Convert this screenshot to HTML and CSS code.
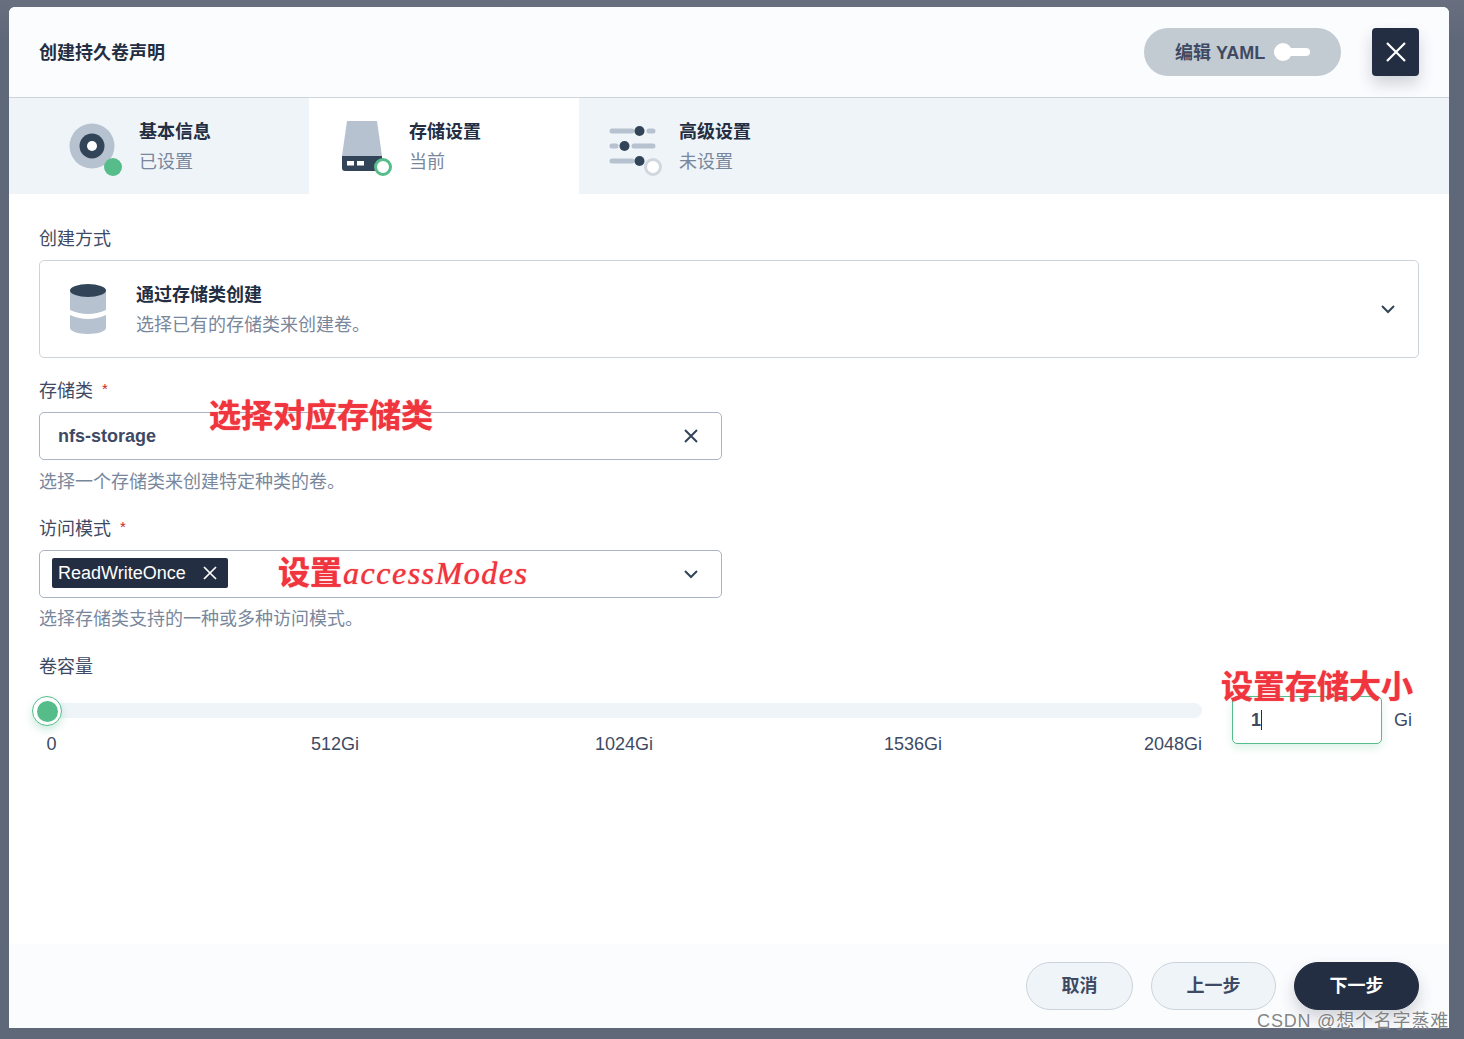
FILE: index.html
```html
<!DOCTYPE html>
<html>
<head>
<meta charset="utf-8"/>
<title>创建持久卷声明</title>
<link rel="stylesheet" href="styles.css">
</head>
<body>
<div class="modal">
  <div class="modal-head">
    <h1 class="modal-title">创建持久卷声明</h1>
    <div class="yaml-btn"><span class="yaml-text">编辑 YAML</span><span class="toggle"><i></i></span></div>
    <div class="close-btn">
      <svg width="20" height="20" viewBox="0 0 20 20"><path d="M1 1L19 19M19 1L1 19" stroke="#fff" stroke-width="2.2" fill="none"/></svg>
    </div>
  </div>

  <div class="tabs">
    <div class="tab tab-first">
      <svg class="tab-icon" width="60" height="60" viewBox="0 0 60 60">
        <circle cx="27" cy="30" r="22.5" fill="#b6c2cf"/>
        <circle cx="27" cy="30" r="12.5" fill="#324558"/>
        <circle cx="27" cy="30" r="5" fill="#fff"/>
        <circle cx="48" cy="51" r="9" fill="#55bc8a"/>
      </svg>
      <div class="tab-text"><b>基本信息</b><span>已设置</span></div>
    </div>
    <div class="tab tab-active">
      <svg class="tab-icon" width="60" height="60" viewBox="0 0 60 60">
        <path d="M12 5H42L47 40H7Z" fill="#b6c2cf"/>
        <path d="M7 40H47V52Q47 55 44 55H10Q7 55 7 52Z" fill="#324558"/>
        <rect x="12" y="45" width="7" height="4.5" fill="#fff"/>
        <rect x="22" y="45" width="7" height="4.5" fill="#fff"/>
        <circle cx="48" cy="51" r="7.5" fill="#fff" stroke="#55bc8a" stroke-width="3"/>
      </svg>
      <div class="tab-text"><b>存储设置</b><span>当前</span></div>
    </div>
    <div class="tab">
      <svg class="tab-icon" width="60" height="60" viewBox="0 0 60 60">
        <g stroke="#b6c2cf" stroke-width="5" stroke-linecap="round" fill="none">
          <path d="M7 15H27M44 15H48M7 30H11M29 30H48M7 45H27"/>
        </g>
        <circle cx="34.500" cy="15" r="5" fill="#324558"/>
        <circle cx="19.500" cy="30" r="5" fill="#324558"/>
        <circle cx="34.500" cy="45" r="5" fill="#324558"/>
        <circle cx="48" cy="51" r="7.500" fill="#fff" stroke="#d0d7df" stroke-width="3"/>
      </svg>
      <div class="tab-text"><b>高级设置</b><span>未设置</span></div>
    </div>
  </div>

  <div class="modal-body">
    <div class="label first">创建方式</div>
    <div class="select select-big">
      <svg width="36" height="50" viewBox="0 0 36 50">
        <path d="M0 6V26Q18 34 36 26V6Z" fill="#b6c2cf"/>
        <path d="M0 31Q18 39 36 31V44C36 47 28 50 18 50C8 50 0 47 0 44Z" fill="#b6c2cf"/>
        <ellipse cx="18" cy="6.500" rx="18" ry="6.500" fill="#324558"/>
      </svg>
      <div class="select-text"><b>通过存储类创建</b><span>选择已有的存储类来创建卷。</span></div>
      <svg class="chev" width="14" height="9" viewBox="0 0 14 9"><path d="M1 1L7 7L13 1" stroke="#324558" stroke-width="2" fill="none"/></svg>
    </div>

    <div class="label">存储类<em>*</em></div>
    <div class="select select-half">
      <span class="value">nfs-storage</span>
      <svg class="chev" width="14" height="14" viewBox="0 0 14 14"><path d="M1 1L13 13M13 1L1 13" stroke="#324558" stroke-width="2" fill="none"/></svg>
    </div>
    <div class="desc">选择一个存储类来创建特定种类的卷。</div>

    <div class="label lower">访问模式<em>*</em></div>
    <div class="select select-half select-tags">
      <span class="tag">ReadWriteOnce
        <svg width="14" height="14" viewBox="0 0 14 14"><path d="M1 1L13 13M13 1L1 13" stroke="#fff" stroke-width="1.700" fill="none"/></svg>
      </span>
      <svg class="chev" width="14" height="9" viewBox="0 0 14 9"><path d="M1 1L7 7L13 1" stroke="#324558" stroke-width="2" fill="none"/></svg>
    </div>
    <div class="desc desc-last">选择存储类支持的一种或多种访问模式。</div>

    <div class="label lower">卷容量</div>
    <div class="size-row">
      <div class="slider">
        <div class="track"><span class="handle"><i></i></span></div>
        <div class="ticks">
          <span>0</span><span>512Gi</span><span>1024Gi</span><span>1536Gi</span><span>2048Gi</span>
        </div>
      </div>
      <div class="size-input">1<span class="caret"></span></div>
      <span class="unit">Gi</span>
    </div>
  </div>

  <div class="modal-foot">
    <div class="btn">取消</div>
    <div class="btn">上一步</div>
    <div class="btn btn-primary">下一步</div>
  </div>

  <!-- red notes drawn on top of the form -->
  <div class="note note-class">选择对应存储类</div>
  <div class="note note-mode">设置<i>accessModes</i></div>
  <div class="note note-size">设置存储大小</div>
  <div class="watermark">CSDN @想个名字蒸难</div>
</div>
</body>
</html>
```

FILE: styles.css
```css
* {
  box-sizing: border-box;
}

body {
  margin: 0;
  height: 1039px;
  padding: 7px 15px 11px 9px;
  background: linear-gradient(#686f7f, #5f6879 40px);
  font-family: "Liberation Sans", "Noto Sans CJK SC", sans-serif;
  font-size: 18px;
  color: #3e4a63;
  overflow: hidden;
}

.modal {
  position: relative;
  display: flex;
  flex-direction: column;
  height: 1021px;
  background: #fff;
  border-radius: 6px 6px 0 0;
}

.modal-head {
  display: flex;
  align-items: center;
  height: 91px;
  padding: 0 30px;
  background: #fbfcfe;
  border-bottom: 1px solid #ccd3db;
  border-radius: 6px 6px 0 0;
}

.modal-title {
  margin: 2px auto 0 0;
  font-size: 18px;
  line-height: 24px;
  color: #242e42;
}

.yaml-btn {
  display: flex;
  align-items: center;
  width: 197px;
  height: 48px;
  padding-left: 31px;
  border-radius: 24px;
  background: #c2cad2;
  font-weight: bold;
}

.yaml-text {
  margin-top: -2px;
}

.toggle {
  position: relative;
  width: 36px;
  height: 8px;
  margin-left: 9px;
  border-radius: 4px;
  background: #fff;
}

.toggle i {
  position: absolute;
  left: 0;
  top: -5px;
  width: 18px;
  height: 18px;
  border-radius: 50%;
  background: #fff;
}

.close-btn {
  display: flex;
  align-items: center;
  justify-content: center;
  width: 47px;
  height: 48px;
  margin-left: 31px;
  border-radius: 4px;
  background: #242e42;
  box-shadow: 0 8px 16px rgba(36, 46, 66, 0.2);
}

.tabs {
  display: flex;
  height: 96px;
  background: #eff4f8;
}

.tab {
  display: flex;
  align-items: flex-start;
  width: 270px;
  padding: 18px 0 0 26px;
}

.tab-first {
  width: 300px;
  padding-left: 56px;
}

.tab-active {
  background: #fff;
}

.tab-icon {
  flex: none;
  margin-right: 14px;
}

.tab-text b,
.tab-text span,
.select-text b,
.select-text span {
  display: block;
  line-height: 30px;
}

.tab-text b,
.select-text b {
  color: #242e42;
}

.tab-text span,
.select-text span {
  color: #79879c;
}

.tab-text {
  margin-top: 1px;
}

.modal-body {
  flex: 1;
  padding: 0 30px;
}

.label {
  height: 24px;
  margin-top: 19px;
  line-height: 24px;
}

.label.first {
  margin-top: 33px;
}

.label.lower {
  margin-top: 21px;
}

.label em {
  margin-left: 9px;
  font-style: normal;
  font-size: 15px;
  color: #ca2621;
  vertical-align: 3px;
}

.select {
  display: flex;
  align-items: center;
  justify-content: space-between;
  height: 48px;
  margin-top: 11px;
  padding: 0 23px 0 18px;
  border: 1px solid #abb4c4;
  border-radius: 5px;
}

.select-big {
  justify-content: flex-start;
  height: 98px;
  margin-top: 9px;
  padding-left: 30px;
  border-color: #ccd3db;
}

.select-big .chev {
  margin-left: auto;
}

.select-text {
  margin: 2px 0 0 30px;
}

.select-half {
  width: 683px;
}

.select-tags {
  padding-left: 12px;
}

.value {
  font-weight: bold;
}

.tag {
  display: flex;
  align-items: center;
  justify-content: space-between;
  width: 176px;
  height: 30px;
  margin-top: -2px;
  padding: 0 11px 0 6px;
  border-radius: 2px;
  background: #242e42;
  color: #fff;
}

.desc {
  height: 24px;
  margin-top: 10px;
  line-height: 24px;
  color: #79879c;
}

.desc-last {
  margin-top: 9px;
}

.desc-last + .label.lower {
  margin-top: 24px;
}

.size-row {
  display: flex;
  align-items: flex-start;
  margin-top: 17px;
}

.slider {
  width: 1155px;
  margin-left: 8px;
  padding-top: 7px;
}

.track {
  position: relative;
  height: 15px;
  border-radius: 8px;
  background: #eff4f8;
}

.handle {
  position: absolute;
  left: -15px;
  top: -7px;
  display: flex;
  align-items: center;
  justify-content: center;
  width: 30px;
  height: 30px;
  border: 1px solid #55bc8a;
  border-radius: 50%;
  background: #fff;
  box-shadow: 0 4px 8px rgba(85, 188, 138, 0.3);
}

.handle i {
  width: 21px;
  height: 21px;
  border-radius: 50%;
  background: #55bc8a;
}

.ticks {
  display: grid;
  grid-template-columns: 144px 289px 289px 289px 1fr;
  margin: 14px 0 0 -0.5px;
  line-height: 24px;
  text-align: center;
}

.ticks span:first-child {
  text-align: left;
}

.ticks span:last-child {
  text-align: right;
}

.size-input {
  display: flex;
  align-items: center;
  width: 150px;
  height: 48px;
  margin-left: 30px;
  padding-left: 18px;
  border: 1px solid #55bc8a;
  border-radius: 5px;
  font-weight: bold;
  box-shadow: 0 4px 8px rgba(85, 188, 138, 0.2);
}

.caret {
  width: 1px;
  height: 20px;
  background: #242e42;
}

.unit {
  margin-left: 12px;
  line-height: 48px;
}

.modal-foot {
  display: flex;
  justify-content: flex-end;
  gap: 18px;
  height: 84px;
  padding: 18px 30px;
  background: #fbfcfe;
}

.btn {
  height: 48px;
  padding: 0 34.5px;
  border: 1px solid #ccd3db;
  border-radius: 24px;
  background: #eff4f8;
  font-weight: bold;
  line-height: 46px;
}

.btn-primary {
  border-color: #242e42;
  background: #242e42;
  color: #fff;
  box-shadow: 0 8px 16px rgba(36, 46, 66, 0.2);
}

.note {
  position: absolute;
  font-size: 32px;
  font-weight: bold;
  line-height: 40px;
  color: #f0353f;
  text-shadow: 0 0 1px #f0353f;
  white-space: nowrap;
}

.note i {
  margin-left: 1px;
  font-family: "Liberation Serif", serif;
  font-weight: normal;
  letter-spacing: 1.5px;
}

.note-class {
  left: 200px;
  top: 389px;
}

.note-mode {
  left: 269px;
  top: 546px;
}

.note-size {
  left: 1212px;
  top: 660px;
}

.watermark {
  position: absolute;
  right: 0;
  top: 1002px;
  line-height: 24px;
  letter-spacing: 0.8px;
  color: rgba(100, 100, 100, 0.8);
  text-shadow: 0 0 2px rgba(255, 255, 255, 0.7);
  white-space: nowrap;
}
```
